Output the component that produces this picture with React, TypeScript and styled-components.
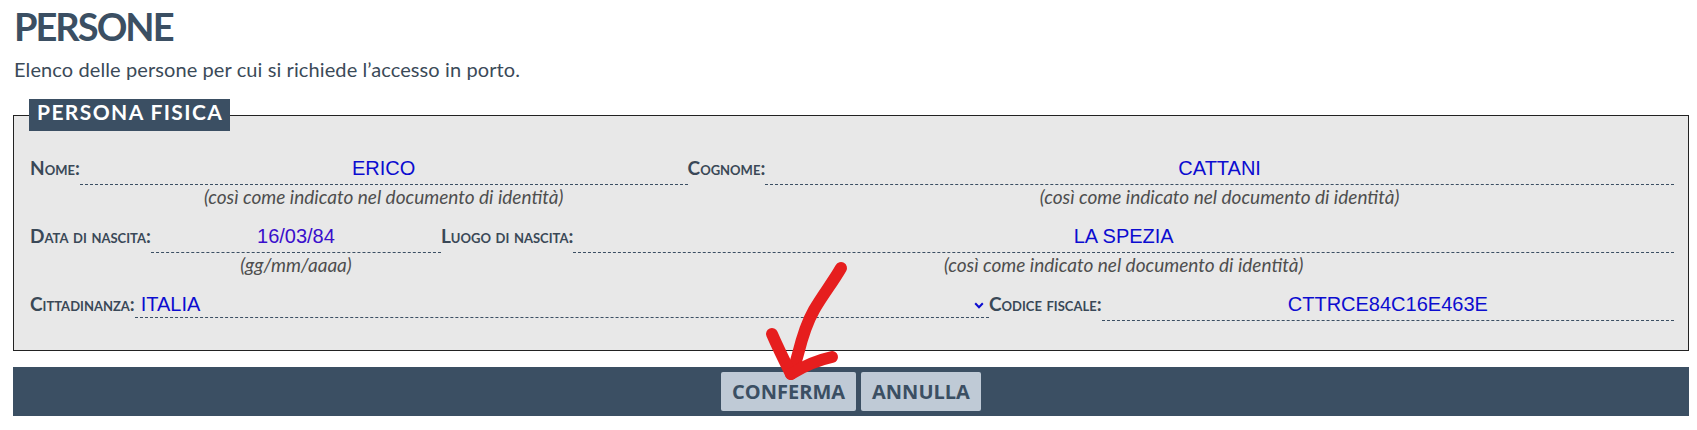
import React from 'react';
import styled, { createGlobalStyle } from 'styled-components';

const GlobalStyle = createGlobalStyle`
  html, body {
    margin: 0;
    padding: 0;
    background: #ffffff;
  }
  body {
    font-family: Lato, "Open Sans", sans-serif;
  }
`;

const slate = '#3b4f63';

const Page = styled.div`
  position: relative;
  padding: 3px 8px 0 13px;
`;

const Title = styled.h1`
  margin: 0 0 0 1px;
  font: 700 38px/47px Lato, sans-serif;
  letter-spacing: -2px;
  color: ${slate};
`;

const Intro = styled.p`
  margin: 7px 0 0 1px;
  font: 400 20px/24px Lato, sans-serif;
  letter-spacing: 0.1px;
  color: #3b4a58;
`;

const Box = styled.fieldset`
  margin: 18px 0 0;
  min-width: 0;
  border: 1px solid #222222;
  background: #e8e8e8;
  padding: 24px 14px 29px 16px;
`;

const Legend = styled.legend`
  margin-left: -1px;
  padding: 0 7px 0 8px;
  height: 32px;
  line-height: 32px;
  background: ${slate};
  color: #ffffff;
  font: 700 21px Lato, sans-serif;
  letter-spacing: 1.4px;
`;

const Row = styled.div<{ $cols: string }>`
  display: grid;
  grid-template-columns: ${(p) => p.$cols};
  & + & {
    margin-top: 16px;
  }
`;

const Field = styled.div`
  display: flex;
  align-items: baseline;
  min-width: 0;
`;

const Label = styled.span`
  flex: 0 0 auto;
  font: 700 19px/26px Lato, sans-serif;
  font-variant: small-caps;
  color: #3a4857;
  white-space: nowrap;
`;

const ValueWrap = styled.div`
  flex: 1 1 auto;
  min-width: 0;
`;

const Value = styled.div<{ $purple?: boolean; $select?: boolean }>`
  display: flex;
  align-items: center;
  justify-content: ${(p) => (p.$select ? 'space-between' : 'center')};
  height: 26px;
  line-height: 26px;
  padding: ${(p) => (p.$select ? '0 5px 0 6px' : '0 0 3px')};
  border-bottom: 1px dashed ${slate};
  font: 400 20px/26px "Liberation Sans", Arial, sans-serif;
  color: ${(p) => (p.$purple ? '#3a0fcc' : '#0c0cd0')};
`;

const Hint = styled.div`
  margin-top: 2px;
  text-align: center;
  font: italic 400 19px/20px Lato, sans-serif;
  color: #4e4e4e;
`;

const Chevron = styled.svg`
  width: 10px;
  height: 7px;
  margin-top: 2px;
`;

const Bar = styled.div`
  margin-top: 16px;
  display: flex;
  justify-content: center;
  gap: 5px;
  padding: 5px 0;
  background: ${slate};
`;

const Button = styled.button`
  height: 39px;
  padding: 0 11px;
  border: none;
  border-radius: 2px;
  background: #bfcad6;
  color: ${slate};
  font: 700 20px "Open Sans", sans-serif;
  cursor: pointer;
`;

const Annotation = styled.svg`
  position: absolute;
  left: 0;
  top: 0;
  width: 1697px;
  height: 430px;
  pointer-events: none;
`;

const HINT = '(così come indicato nel documento di identità)';

const App: React.FC = () => {
  return (
    <>
      <GlobalStyle />
      <Page>
        <Title>PERSONE</Title>
        <Intro>Elenco delle persone per cui si richiede l’accesso in porto.</Intro>

        <Box>
          <Legend>PERSONA FISICA</Legend>

          <Row $cols="40% 60%">
            <Field>
              <Label>Nome:</Label>
              <ValueWrap>
                <Value>ERICO</Value>
                <Hint>{HINT}</Hint>
              </ValueWrap>
            </Field>
            <Field>
              <Label>Cognome:</Label>
              <ValueWrap>
                <Value>CATTANI</Value>
                <Hint>{HINT}</Hint>
              </ValueWrap>
            </Field>
          </Row>

          <Row $cols="25% 75%">
            <Field>
              <Label>Data di nascita:</Label>
              <ValueWrap>
                <Value $purple>16/03/84</Value>
                <Hint>(gg/mm/aaaa)</Hint>
              </ValueWrap>
            </Field>
            <Field>
              <Label>Luogo di nascita:</Label>
              <ValueWrap>
                <Value>LA SPEZIA</Value>
                <Hint>{HINT}</Hint>
              </ValueWrap>
            </Field>
          </Row>

          <Row $cols="7fr 5fr">
            <Field>
              <Label>Cittadinanza:</Label>
              <ValueWrap>
                <Value $select>
                  <span>ITALIA</span>
                  <Chevron viewBox="0 0 10 7">
                    <path d="M1.2 1.2 L5 5.2 L8.8 1.2" fill="none" stroke="#0c0cd0" strokeWidth="2" />
                  </Chevron>
                </Value>
              </ValueWrap>
            </Field>
            <Field>
              <Label>Codice fiscale:</Label>
              <ValueWrap>
                <Value>CTTRCE84C16E463E</Value>
              </ValueWrap>
            </Field>
          </Row>
        </Box>

        <Bar>
          <Button>CONFERMA</Button>
          <Button>ANNULLA</Button>
        </Bar>

        <Annotation viewBox="0 0 1697 430">
          <g fill="none" stroke="#e61e1e" strokeWidth="12" strokeLinecap="round" strokeLinejoin="round">
            <path d="M841 268 C833 282 822 296 814 310 C806 324 802 338 798 354 C796 362 794 368 792 373" />
            <path d="M772 334 C778 348 785 362 791 374" />
            <path d="M791 374 C804 366 818 360 832 357" />
          </g>
        </Annotation>
      </Page>
    </>
  );
};

export default App;
